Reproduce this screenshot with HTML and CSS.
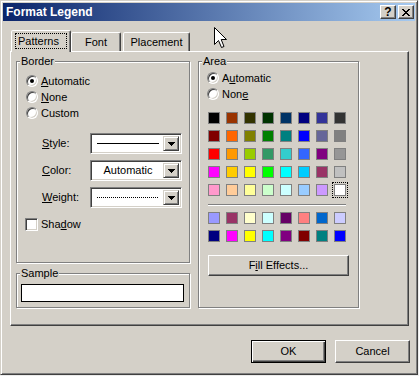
FILE: index.html
```html
<!DOCTYPE html>
<html>
<head>
<meta charset="utf-8">
<title>Format Legend</title>
<link rel="stylesheet" href="styles.css">
</head>
<body>
<div class="dialog">
  <div class="titlebar">
    <span class="title">Format Legend</span>
    <div class="caption-buttons">
      <span class="cap-btn">?</span>
      <span class="cap-btn"><svg width="8" height="7" viewBox="0 0 8 7" shape-rendering="crispEdges"><path d="M0 0h2v1h1v1h2v-1h1v-1h2v1h-1v1h-1v1h-1v1h1v1h1v1h1v1h-2v-1h-1v-1h-2v1h-1v1h-2v-1h1v-1h1v-1h1v-1h-1v-1h-1v-1h-1z" fill="#000"/></svg></span>
    </div>
  </div>
  <div class="body">
    <div class="tabs">
      <div class="tab active"><span class="focus">Patterns</span></div>
      <div class="tab font-tab">Font</div>
      <div class="tab placement-tab">Placement</div>
    </div>
    <div class="panel">
      <div class="left-col">
        <div class="group border-group">
          <span class="group-label">Border</span>
          <div class="radio-list">
            <div class="radio-row"><span class="radio checked"></span><span><u>A</u>utomatic</span></div>
            <div class="radio-row"><span class="radio"></span><span><u>N</u>one</span></div>
            <div class="radio-row"><span class="radio"></span><span>Custom</span></div>
          </div>
          <div class="combo-list">
            <div class="combo-row">
              <span class="combo-label"><u>S</u>tyle:</span>
              <div class="combo"><div class="combo-field"><span class="line-solid"></span></div><span class="combo-btn"><svg width="7" height="4" viewBox="0 0 7 4" shape-rendering="crispEdges"><path d="M0 0H7V1H6V2H5V3H4V4H3V3H2V2H1V1H0Z" fill="#000"/></svg></span></div>
            </div>
            <div class="combo-row">
              <span class="combo-label"><u>C</u>olor:</span>
              <div class="combo"><div class="combo-field"><span>Automatic</span></div><span class="combo-btn"><svg width="7" height="4" viewBox="0 0 7 4" shape-rendering="crispEdges"><path d="M0 0H7V1H6V2H5V3H4V4H3V3H2V2H1V1H0Z" fill="#000"/></svg></span></div>
            </div>
            <div class="combo-row">
              <span class="combo-label"><u>W</u>eight:</span>
              <div class="combo"><div class="combo-field"><span class="line-dotted"></span></div><span class="combo-btn"><svg width="7" height="4" viewBox="0 0 7 4" shape-rendering="crispEdges"><path d="M0 0H7V1H6V2H5V3H4V4H3V3H2V2H1V1H0Z" fill="#000"/></svg></span></div>
            </div>
          </div>
          <div class="check-row"><span class="checkbox"></span><span>Sha<u>d</u>ow</span></div>
        </div>
        <div class="group sample-group">
          <span class="group-label">Sample</span>
          <div class="sample-box"></div>
        </div>
      </div>
      <div class="group area-group">
        <span class="group-label">Area</span>
        <div class="radio-row"><span class="radio checked"></span><span>A<u>u</u>tomatic</span></div>
        <div class="radio-row"><span class="radio"></span><span>Non<u>e</u></span></div>
        <div class="swatches">
          <span class="swatch" style="background:#000000"></span>
          <span class="swatch" style="background:#993300"></span>
          <span class="swatch" style="background:#333300"></span>
          <span class="swatch" style="background:#003300"></span>
          <span class="swatch" style="background:#003366"></span>
          <span class="swatch" style="background:#000080"></span>
          <span class="swatch" style="background:#333399"></span>
          <span class="swatch" style="background:#333333"></span>
          <span class="swatch" style="background:#800000"></span>
          <span class="swatch" style="background:#FF6600"></span>
          <span class="swatch" style="background:#808000"></span>
          <span class="swatch" style="background:#008000"></span>
          <span class="swatch" style="background:#008080"></span>
          <span class="swatch" style="background:#0000FF"></span>
          <span class="swatch" style="background:#666699"></span>
          <span class="swatch" style="background:#808080"></span>
          <span class="swatch" style="background:#FF0000"></span>
          <span class="swatch" style="background:#FF9900"></span>
          <span class="swatch" style="background:#99CC00"></span>
          <span class="swatch" style="background:#339966"></span>
          <span class="swatch" style="background:#33CCCC"></span>
          <span class="swatch" style="background:#3366FF"></span>
          <span class="swatch" style="background:#800080"></span>
          <span class="swatch" style="background:#969696"></span>
          <span class="swatch" style="background:#FF00FF"></span>
          <span class="swatch" style="background:#FFCC00"></span>
          <span class="swatch" style="background:#FFFF00"></span>
          <span class="swatch" style="background:#00FF00"></span>
          <span class="swatch" style="background:#00FFFF"></span>
          <span class="swatch" style="background:#00CCFF"></span>
          <span class="swatch" style="background:#993366"></span>
          <span class="swatch" style="background:#C0C0C0"></span>
          <span class="swatch" style="background:#FF99CC"></span>
          <span class="swatch" style="background:#FFCC99"></span>
          <span class="swatch" style="background:#FFFF99"></span>
          <span class="swatch" style="background:#CCFFCC"></span>
          <span class="swatch" style="background:#CCFFFF"></span>
          <span class="swatch" style="background:#99CCFF"></span>
          <span class="swatch" style="background:#CC99FF"></span>
          <span class="swatch selected" style="background:#FFFFFF"></span>
        </div>
        <div class="separator"></div>
        <div class="swatches second">
          <span class="swatch" style="background:#9999FF"></span>
          <span class="swatch" style="background:#993366"></span>
          <span class="swatch" style="background:#FFFFCC"></span>
          <span class="swatch" style="background:#CCFFFF"></span>
          <span class="swatch" style="background:#660066"></span>
          <span class="swatch" style="background:#FF8080"></span>
          <span class="swatch" style="background:#0066CC"></span>
          <span class="swatch" style="background:#CCCCFF"></span>
          <span class="swatch" style="background:#000080"></span>
          <span class="swatch" style="background:#FF00FF"></span>
          <span class="swatch" style="background:#FFFF00"></span>
          <span class="swatch" style="background:#00FFFF"></span>
          <span class="swatch" style="background:#800080"></span>
          <span class="swatch" style="background:#800000"></span>
          <span class="swatch" style="background:#008080"></span>
          <span class="swatch" style="background:#0000FF"></span>
        </div>
        <button class="btn fill-btn">F<u>i</u>ll Effects...</button>
      </div>
    </div>
    <div class="actions">
      <button class="btn default">OK</button>
      <button class="btn">Cancel</button>
    </div>
  </div>
  <svg class="cursor" width="13" height="22" viewBox="0 0 13 22"><path d="M0.5 0.5V17.5L4.5 13.5L7.5 20.5L10 19.5L7.2 12.5H12.5Z" fill="#fff" stroke="#000" stroke-width="1"/></svg>
</div>
</body>
</html>
```
FILE: styles.css
```css
html, body {
  margin: 0;
  padding: 0;
}
body {
  background: #ececec;
  font: 11px/13px "Liberation Sans", Arial, sans-serif;
  color: #000;
}
.dialog {
  position: relative;
  width: 418px;
  height: 375px;
  box-sizing: border-box;
  background: #D4D0C8;
  border: 1px solid;
  border-color: #D4D0C8 #404040 #404040 #D4D0C8;
  padding: 2px;
  box-shadow: inset 1px 1px #fff, inset -1px -1px #808080;
}
.titlebar {
  height: 18px;
  display: flex;
  align-items: center;
  justify-content: space-between;
  background: linear-gradient(to right, #0A246A, #A6CAF0);
  padding: 0 1px 0 3px;
}
.title {
  color: #fff;
  font-weight: bold;
  font-size: 12px;
}
.caption-buttons {
  display: flex;
  gap: 2px;
}
.cap-btn {
  width: 16px;
  height: 14px;
  box-sizing: border-box;
  background: #D4D0C8;
  border: 1px solid;
  border-color: #fff #404040 #404040 #fff;
  box-shadow: inset -1px -1px #808080;
  display: flex;
  align-items: center;
  justify-content: center;
  font-weight: bold;
  font-size: 12px;
  line-height: 12px;
}
.body {
  padding: 9px 0 0 7px;
}
.tabs {
  display: flex;
  align-items: flex-end;
  height: 21px;
  padding-left: 1px;
}
.tab {
  box-sizing: border-box;
  height: 19px;
  border: 1px solid;
  border-bottom: none;
  border-color: #fff #404040 transparent #fff;
  border-radius: 2px 2px 0 0;
  box-shadow: inset -1px 0 #808080;
  display: flex;
  align-items: center;
  justify-content: center;
  background: #D4D0C8;
  padding-top: 1px;
}
.tab.active {
  width: 60px;
  height: 22px;
  margin-bottom: -1px;
  position: relative;
  z-index: 1;
  align-items: flex-start;
  justify-content: flex-start;
  padding: 2px 0 0 3px;
}
.focus {
  box-sizing: border-box;
  width: 52px;
  height: 16px;
  border: 1px dotted #000;
  padding-left: 2px;
  line-height: 14px;
}
.font-tab {
  width: 50px;
}
.placement-tab {
  width: 67px;
  margin-left: 2px;
}
.panel {
  box-sizing: border-box;
  width: 399px;
  height: 275px;
  border: 1px solid;
  border-color: #fff #404040 #404040 #fff;
  box-shadow: inset -1px -1px #808080;
  padding: 9px 0 0 5px;
  display: flex;
  gap: 8px;
  align-items: flex-start;
}
.left-col {
  display: flex;
  flex-direction: column;
  gap: 10px;
  width: 174px;
}
.group {
  position: relative;
  box-sizing: border-box;
  border: 1px solid #808080;
  box-shadow: inset 1px 1px #fff, 1px 1px #fff;
}
.group-label {
  position: absolute;
  top: -7px;
  left: 3px;
  padding: 0 1px;
  background: #D4D0C8;
  line-height: 13px;
}
.border-group {
  height: 202px;
  padding: 11px 0 0 9px;
}
.radio-row {
  display: flex;
  align-items: center;
  gap: 3px;
  height: 16px;
}
.radio {
  position: relative;
  width: 12px;
  height: 12px;
  box-sizing: border-box;
  border-radius: 50%;
  border: 1px solid;
  border-color: #808080 #fff #fff #808080;
  background: #fff;
  box-shadow: inset 1px 1px #404040, inset -1px -1px #D4D0C8;
}
.radio.checked::after {
  content: "";
  position: absolute;
  left: 3px;
  top: 3px;
  width: 4px;
  height: 4px;
  border-radius: 50%;
  background: #000;
}
.combo-list {
  margin-top: 12px;
  display: flex;
  flex-direction: column;
  gap: 6px;
}
.combo-row {
  display: flex;
  align-items: center;
}
.combo-label {
  box-sizing: border-box;
  width: 64px;
  padding-left: 16px;
}
.combo {
  box-sizing: border-box;
  width: 92px;
  height: 21px;
  border: 1px solid;
  border-color: #808080 #fff #fff #808080;
  box-shadow: inset 1px 1px #404040, inset -1px -1px #D4D0C8;
  background: #fff;
  display: flex;
  padding: 2px;
}
.combo-field {
  flex: 1;
  display: flex;
  align-items: center;
  justify-content: center;
}
.line-solid {
  width: 62px;
  height: 1px;
  background: #000;
}
.line-dotted {
  width: 62px;
  height: 1px;
  background: repeating-linear-gradient(to right, #000 0 1px, transparent 1px 2px);
}
.combo-btn {
  width: 16px;
  box-sizing: border-box;
  background: #D4D0C8;
  border: 1px solid;
  border-color: #D4D0C8 #404040 #404040 #D4D0C8;
  box-shadow: inset 1px 1px #fff, inset -1px -1px #808080;
  display: flex;
  align-items: center;
  justify-content: center;
}
.check-row {
  margin: 10px 0 0 -1px;
  display: flex;
  align-items: center;
  gap: 3px;
  height: 13px;
}
.checkbox {
  width: 13px;
  height: 13px;
  box-sizing: border-box;
  border: 1px solid;
  border-color: #808080 #fff #fff #808080;
  box-shadow: inset 1px 1px #404040, inset -1px -1px #D4D0C8;
  background: #fff;
}
.sample-group {
  height: 35px;
  padding: 10px 0 0 4px;
}
.sample-box {
  box-sizing: border-box;
  width: 163px;
  height: 18px;
  border: 1px solid #000;
  background: #fff;
}
.area-group {
  width: 161px;
  height: 247px;
  padding: 8px 0 0 8px;
}
.swatches {
  display: grid;
  grid-template-columns: repeat(8, 12px);
  grid-auto-rows: 12px;
  gap: 6px;
  margin: 10px 0 0 1px;
}
.swatches.second {
  margin-top: 7px;
}
.swatch {
  box-sizing: border-box;
  width: 12px;
  height: 12px;
  border: 1px solid #808080;
}
.swatch.selected {
  outline: 1px dotted #000;
  outline-offset: 1px;
}
.separator {
  width: 138px;
  height: 1px;
  background: #808080;
  box-shadow: 0 1px #fff;
  margin: 8px 0 0 1px;
}
.btn {
  box-sizing: border-box;
  width: 75px;
  height: 23px;
  padding: 0;
  font: inherit;
  color: #000;
  background: #D4D0C8;
  border: 1px solid;
  border-color: #fff #404040 #404040 #fff;
  box-shadow: inset -1px -1px #808080;
}
.btn.default {
  border-color: #000;
  box-shadow: inset 1px 1px #fff, inset -1px -1px #404040, inset -2px -2px #808080;
}
.fill-btn {
  display: block;
  width: 141px;
  height: 21px;
  margin: 13px 0 0 1px;
}
.actions {
  display: flex;
  justify-content: flex-end;
  gap: 9px;
  margin-top: 14px;
  padding-right: 5px;
}
.cursor {
  position: absolute;
  left: 213px;
  top: 26px;
}
```
